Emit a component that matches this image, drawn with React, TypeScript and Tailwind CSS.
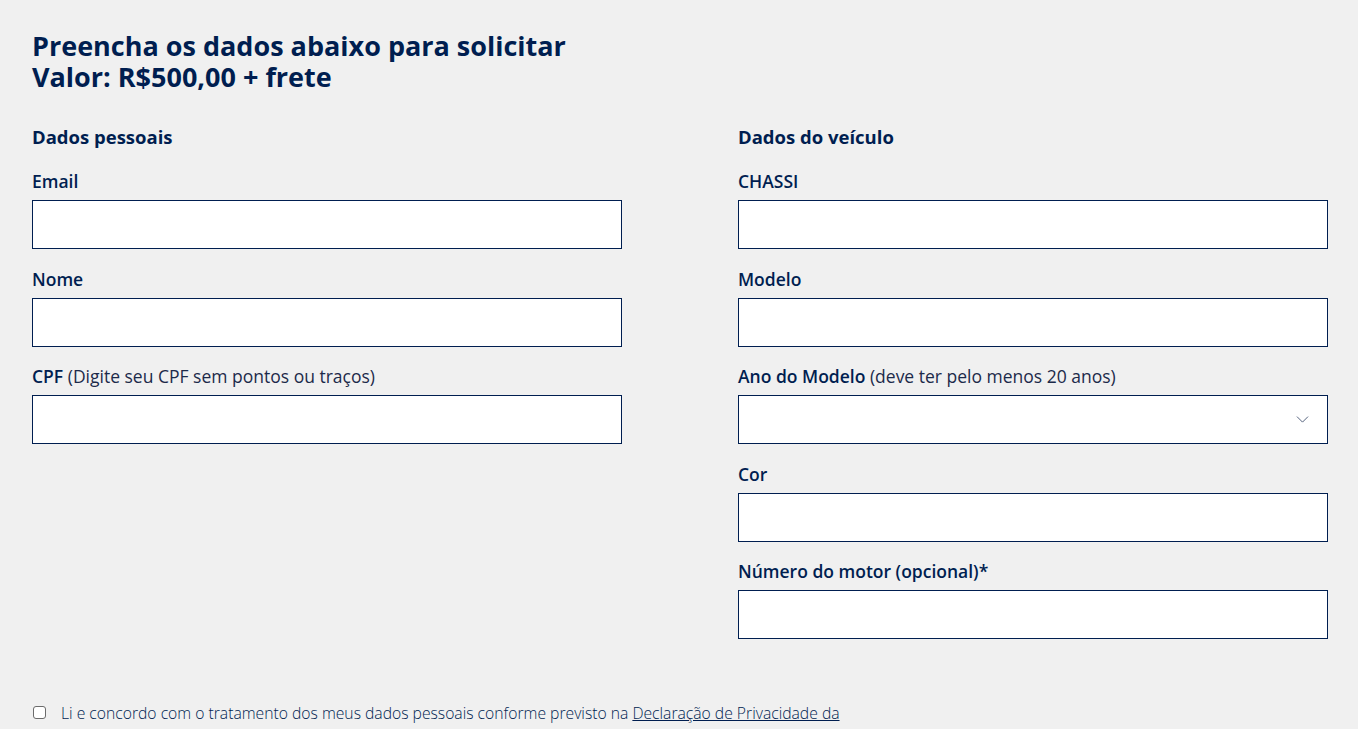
import { ChevronDown } from 'lucide-react';

const left = [
  { label: 'Email' },
  { label: 'Nome' },
  { label: 'CPF', hint: '(Digite seu CPF sem pontos ou traços)' },
];

const right = [
  { label: 'CHASSI' },
  { label: 'Modelo' },
  { label: 'Ano do Modelo', hint: '(deve ter pelo menos 20 anos)', select: true },
  { label: 'Cor' },
  { label: 'Número do motor (opcional)*' },
];

type Field = { label: string; hint?: string; select?: boolean };

function FieldRow({ f }: { f: Field }) {
  return (
    <div className="flex flex-col">
      <label className="h-6 text-[17.5px] leading-6 font-semibold whitespace-nowrap text-[#001e50]">
        {f.label}
        {f.hint && <span className="font-normal text-[#1c2a4a]"> {f.hint}</span>}
      </label>
      <div className="relative mt-[7px] h-[49px] border border-[#001e50] bg-white">
        {f.select && (
          <ChevronDown
            className="absolute right-[14px] top-[13px] text-[#3c4c6a]"
            size={21}
            strokeWidth={1}
          />
        )}
      </div>
    </div>
  );
}

export default function App() {
  return (
    <div
      className="min-h-screen w-full overflow-hidden bg-[#f0f0f0] pl-8 pr-[30px] pt-[30px] text-[#001e50]"
      style={{ fontFamily: '"Open Sans", "Noto Sans", sans-serif' }}
    >
      <h1 className="text-[27px] leading-[31px] font-bold">
        Preencha os dados abaixo para solicitar
        <br />
        Valor: R$500,00 + frete
      </h1>

      <div className="mt-[33px] grid grid-cols-2 gap-x-[116px]">
        <div className="flex flex-col">
          <h2 className="h-6 text-[18.5px] leading-6 font-bold">Dados pessoais</h2>
          <div className="mt-5 flex flex-col gap-[17.5px]">
            {left.map((f) => (
              <FieldRow key={f.label} f={f} />
            ))}
          </div>
        </div>
        <div className="flex flex-col">
          <h2 className="h-6 text-[18.5px] leading-6 font-bold">Dados do veículo</h2>
          <div className="mt-5 flex flex-col gap-[17.5px]">
            {right.map((f) => (
              <FieldRow key={f.label} f={f} />
            ))}
          </div>
        </div>
      </div>

      <div className="mt-[62px] flex items-start gap-[15px]">
        <input
          type="checkbox"
          className="mt-[5px] ml-px h-[13px] w-[13px] shrink-0 appearance-none rounded-[3px] border border-[#6b6b6b] bg-white"
        />
        <p className="w-[800px] text-[15.7px] leading-[24px] font-light text-[#001e50]">
          Li e concordo com o tratamento dos meus dados pessoais conforme previsto na{' '}
          <a href="#" className="underline">
            Declaração de Privacidade da Volkswagen
          </a>
        </p>
      </div>
    </div>
  );
}
